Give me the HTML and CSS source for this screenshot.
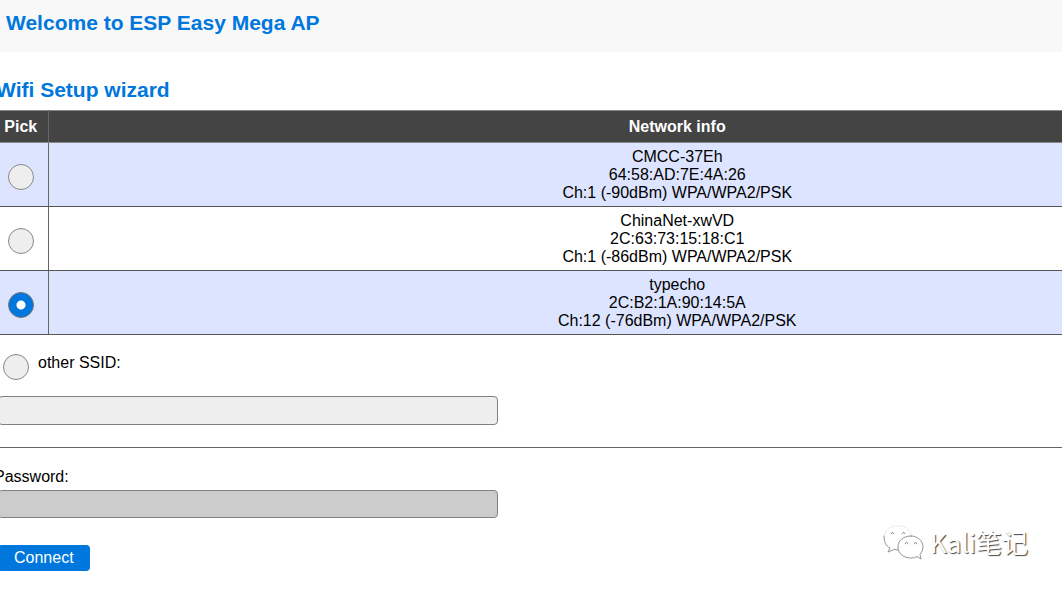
FILE: index.html
```html
<!DOCTYPE html>
<html lang="en">
<head>
<meta charset="utf-8">
<title>ESP Easy Mega AP</title>
<link rel="stylesheet" href="styles.css">
</head>
<body>
<header class="banner">
  <h1 class="heading">Welcome to ESP Easy Mega AP</h1>
</header>
<main class="main">
  <form class="wizard">
    <h2 class="heading">Wifi Setup wizard</h2>
    <table class="networks">
      <thead>
        <tr><th class="pick">Pick</th><th class="info">Network info</th></tr>
      </thead>
      <tbody>
        <tr>
          <td class="pick"><input class="radio" type="radio" name="ssid" id="net1" aria-label="CMCC-37Eh"></td>
          <td class="info"><label for="net1">CMCC-37Eh<br>64:58:AD:7E:4A:26<br>Ch:1 (-90dBm) WPA/WPA2/PSK</label></td>
        </tr>
        <tr>
          <td class="pick"><input class="radio" type="radio" name="ssid" id="net2" aria-label="ChinaNet-xwVD"></td>
          <td class="info"><label for="net2">ChinaNet-xwVD<br>2C:63:73:15:18:C1<br>Ch:1 (-86dBm) WPA/WPA2/PSK</label></td>
        </tr>
        <tr>
          <td class="pick"><input class="radio" type="radio" name="ssid" id="net3" aria-label="typecho" checked></td>
          <td class="info"><label for="net3">typecho<br>2C:B2:1A:90:14:5A<br>Ch:12 (-76dBm) WPA/WPA2/PSK</label></td>
        </tr>
      </tbody>
    </table>
    <div class="other">
      <input class="radio" type="radio" name="ssid" id="other">
      <label for="other">other SSID:</label>
    </div>
    <input class="field" type="text" aria-label="other SSID">
    <hr class="rule">
    <label class="caption" for="pass">Password:</label>
    <input class="field field-password" type="password" id="pass">
    <button class="connect" type="submit">Connect</button>
  </form>
</main>
<div class="watermark">
  <svg class="watermark-icon" viewBox="0 0 42 36" width="42" height="36" fill="#fff" stroke-linecap="round" stroke-linejoin="round" aria-hidden="true">
    <path stroke="#e4e4e4" stroke-width=".8" d="M29 12C27 5 21 1 14 2C6 2 1 7 1 14C1 19 3 22 7 24L5 28L11 25.500L16 26"/>
    <path fill="none" stroke="#888" stroke-width=".8" d="M1 12C1 18 3 22 7 24L5 28L11 25.500L15 26"/>
    <path stroke="#888" stroke-width=".9" d="M28 12C20 12 15 17 15 23C15 30 21 34 28 34Q32 34 34 32.500L38 35L37 30.500Q40 27 40 23C40 17 35 12 28 12Z"/>
    <path fill="none" stroke="#777" d="M8 9.500Q9.500 7 11 9.500M19 9.500Q20.500 7 22 9.500M22 19.500Q23.500 17 25 19.500M31 19.500Q32.500 17 34 19.500"/>
  </svg>
  <span>Kali笔记</span>
</div>
</body>
</html>
```
FILE: styles.css
```css
* {
  box-sizing: border-box;
}

body {
  margin: 0;
  overflow-x: hidden;
  background: #fff;
  color: #000;
  font: 16px "Liberation Sans", Arial, sans-serif;
}

.heading {
  margin: 0;
  color: #07d;
  font-size: 21px;
  line-height: 24px;
}

.banner {
  padding: 11px 6px 17px;
  background: #f8f8f8;
}

/* The content column starts just past the left edge of the window. */
.main {
  margin-left: -6px;
}

.wizard {
  display: flex;
  flex-direction: column;
  align-items: flex-start;
  padding-top: 26px;
}

.wizard .heading {
  margin-left: 2px;
}

.networks {
  width: 100%;
  margin-top: 8px;
  border-collapse: collapse;
  text-align: center;
}

.networks th {
  height: 32px;
  padding: 0;
  border: 1px solid #888;
  border-width: 1px 0;
  background: #444;
  color: #fff;
}

.networks td {
  height: 64px;
  padding: 4px 0;
  border-bottom: 1px solid #555;
}

.networks tbody tr:nth-child(odd) {
  background: #dde4ff;
}

.networks .pick {
  width: 54px;
  border-right: 1px solid #666;
}

.networks .info {
  padding-left: 244px;
}

.radio {
  appearance: none;
  display: inline-block;
  width: 26px;
  height: 26px;
  margin: 0;
  border: 1px solid #888;
  border-radius: 50%;
  background: #eee;
  vertical-align: middle;
}

.networks .radio {
  margin-top: 4px;
}

.radio:checked {
  border-color: #777;
  background: radial-gradient(circle, #fff 4px, #07d 5px);
}

.other {
  display: flex;
  gap: 9px;
  padding: 19px 9px 16px;
}

.field {
  width: 100%;
  max-width: 500px;
  height: 29px;
  margin: 0 4px;
  padding: 4px 8px;
  border: 1px solid #808080;
  border-radius: 4px;
  background: #eee;
  font: inherit;
}

.field-password {
  height: 28px;
  background: #ccc;
}

.rule {
  width: 100%;
  margin: 22px 0 20px;
  border: 0;
  border-top: 1px solid #666;
}

.caption {
  margin-bottom: 4px;
}

.connect {
  height: 26px;
  margin: 27px 4px 0;
  padding: 0 16px;
  border: 0;
  border-radius: 4px;
  background: #07d;
  color: #fff;
  font: inherit;
}

.watermark {
  position: absolute;
  right: 34px;
  bottom: 29px;
  display: flex;
  align-items: center;
  gap: 5px;
  color: #fff;
  font: 26px/36px "Noto Sans CJK SC", sans-serif;
  text-shadow: 1px 1px 1px #444;
}
```
